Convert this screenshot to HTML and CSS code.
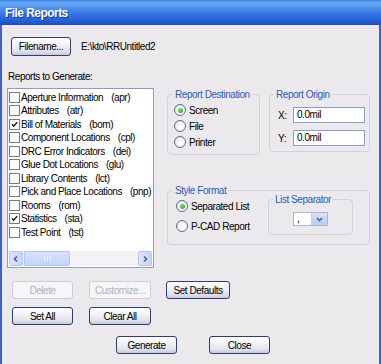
FILE: index.html
```html
<!DOCTYPE html>
<html>
<head>
<meta charset="utf-8">
<link rel="stylesheet" href="styles.css">
</head>
<body>
<div class="window">
  <div class="titlebar"><span class="title">File Reports</span></div>
  <div class="content">
    <div class="file-row">
      <button class="btn btn-file">Filename...</button>
      <span class="path">E:\kto\RRUntitled2</span>
    </div>
    <div class="section-label">Reports to Generate:</div>
    <div class="main">
      <div class="listbox">
        <ul class="items">
          <li><span class="cb"></span>Aperture Information<span class="code">(apr)</span></li>
          <li><span class="cb"></span>Attributes<span class="code">(atr)</span></li>
          <li><span class="cb checked"><svg viewBox="0 0 11 11"><path d="M2.5 5.2 L4.5 7.5 L8.8 2.6" fill="none" stroke="#111" stroke-width="1.7"/></svg></span>Bill of Materials<span class="code">(bom)</span></li>
          <li><span class="cb"></span>Component Locations<span class="code">(cpl)</span></li>
          <li><span class="cb"></span>DRC Error Indicators<span class="code">(dei)</span></li>
          <li><span class="cb"></span>Glue Dot Locations<span class="code">(glu)</span></li>
          <li><span class="cb"></span>Library Contents<span class="code">(lct)</span></li>
          <li><span class="cb"></span>Pick and Place Locations<span class="code">(pnp)</span></li>
          <li><span class="cb"></span>Rooms<span class="code">(rom)</span></li>
          <li><span class="cb checked"><svg viewBox="0 0 11 11"><path d="M2.5 5.2 L4.5 7.5 L8.8 2.6" fill="none" stroke="#111" stroke-width="1.7"/></svg></span>Statistics<span class="code">(sta)</span></li>
          <li><span class="cb"></span>Test Point<span class="code">(tst)</span></li>
        </ul>
        <div class="hscroll">
          <span class="sb-btn"><svg viewBox="0 0 8 8"><path d="M5 1.5 L2.5 4 L5 6.5" fill="none" stroke="#4d6185" stroke-width="1.6"/></svg></span>
          <span class="sb-thumb"><span class="grip"></span></span>
          <span class="sb-track"></span>
          <span class="sb-btn"><svg viewBox="0 0 8 8"><path d="M3 1.5 L5.5 4 L3 6.5" fill="none" stroke="#4d6185" stroke-width="1.6"/></svg></span>
        </div>
      </div>
      <div class="right">
        <div class="top-groups">
          <fieldset class="group dest">
            <legend>Report Destination</legend>
            <div class="dest-body">
              <div class="radio-row"><span class="radio on"></span>Screen</div>
              <div class="radio-row"><span class="radio"></span>File</div>
              <div class="radio-row"><span class="radio"></span>Printer</div>
            </div>
          </fieldset>
          <fieldset class="group origin">
            <legend>Report Origin</legend>
            <div class="origin-body">
              <div class="coord-row"><span class="coord-label">X:</span><span class="field">0.0mil</span></div>
              <div class="coord-row"><span class="coord-label">Y:</span><span class="field">0.0mil</span></div>
            </div>
          </fieldset>
        </div>
        <fieldset class="group style">
          <legend>Style Format</legend>
          <div class="style-body">
            <div class="style-radios">
              <div class="radio-row"><span class="radio on"></span>Separated List</div>
              <div class="radio-row"><span class="radio"></span>P-CAD Report</div>
            </div>
            <fieldset class="group sep">
              <legend>List Separator</legend>
              <div class="sep-body">
                <div class="combo"><span class="combo-val">,</span><span class="combo-btn"><svg viewBox="0 0 9 9"><path d="M2 3 L4.5 5.5 L7 3" fill="none" stroke="#4d6185" stroke-width="1.6"/></svg></span></div>
              </div>
            </fieldset>
          </div>
        </fieldset>
      </div>
    </div>
    <div class="btn-row row1">
      <button class="btn disabled w-delete">Delete</button>
      <button class="btn disabled w-cust">Customize...</button>
      <button class="btn w-defaults">Set Defaults</button>
    </div>
    <div class="btn-row row2">
      <button class="btn w-delete">Set All</button>
      <button class="btn w-cust">Clear All</button>
    </div>
    <div class="btn-row row3">
      <button class="btn w-gen">Generate</button>
      <button class="btn w-gen">Close</button>
    </div>
  </div>
</div>
</body>
</html>
```

FILE: styles.css
```css
html, body {
  margin: 0;
  padding: 0;
  background: #ece9ec;
  overflow: hidden;
}

.window {
  width: 381px;
  height: 364px;
  box-sizing: border-box;
  background: #ece9ec;
  border-left: 2px solid #3d62c8;
  border-right: 2px solid #3d62c8;
  font-family: "Liberation Sans", Arial, sans-serif;
  font-size: 10px;
  letter-spacing: -0.45px;
  color: #000;
  white-space: nowrap;
}

.titlebar {
  height: 25px;
  margin: 0 -2px;
  padding-left: 5px;
  display: flex;
  align-items: center;
  background: linear-gradient(#3a7fe8 0, #6aa9f4 3px, #4a8bec 9px, #3576e3 14px, #2966d8 19px, #1f52c0 24px, #1b49b0 25px);
}

.title {
  color: #fff;
  font-weight: bold;
  font-size: 12px;
  letter-spacing: -0.55px;
  text-shadow: 1px 1px 0 #0f3a9a;
}

.content {
  padding: 12px 0 0 5px;
}

.file-row {
  display: flex;
  align-items: center;
  height: 19px;
}

.btn {
  font-family: inherit;
  font-size: 10px;
  letter-spacing: -0.45px;
  color: #000;
  height: 18px;
  padding: 0;
  margin: 0;
  border: 1px solid #2d3f6a;
  border-radius: 3px;
  background: linear-gradient(#ffffff 0, #f4f4f8 35%, #e2e3ec 75%, #c8cbdd 100%);
  box-sizing: border-box;
}

.btn.disabled {
  color: #b4b2b8;
  border-color: #cfcdd4;
  background: #f6f5f7;
}

.btn-file {
  margin-left: 4px;
  width: 60px;
  height: 19px;
}

.path {
  margin-left: 10px;
}

.section-label {
  margin-top: 14px;
  margin-left: 1px;
  height: 13px;
  line-height: 13px;
}

.main {
  display: flex;
  margin-top: 5px;
}

.listbox {
  width: 147px;
  height: 180px;
  box-sizing: border-box;
  border: 1px solid #8aa0c0;
  background: #fff;
  display: flex;
  flex-direction: column;
}

.items {
  list-style: none;
  margin: 0;
  padding: 1.5px 0 0 1px;
  flex: 1;
}

.items li {
  height: 13.5px;
  line-height: 13.5px;
  display: flex;
  align-items: center;
}

.cb {
  width: 11px;
  height: 11px;
  box-sizing: border-box;
  border: 1px solid #6f7d90;
  background: #fff;
  margin-right: 1px;
  flex: none;
  display: flex;
}

.cb svg {
  width: 9px;
  height: 9px;
}

.code {
  margin-left: 8px;
}

.hscroll {
  height: 15px;
  margin: 0 1px 1px 1px;
  display: flex;
  background: #f3f2f5;
}

.sb-btn {
  width: 14px;
  height: 15px;
  box-sizing: border-box;
  border: 1px solid #b6c6ef;
  border-radius: 2px;
  background: linear-gradient(90deg, #dde6fb, #c3d3f8);
  display: flex;
  align-items: center;
  justify-content: center;
}

.sb-btn svg {
  width: 8px;
  height: 8px;
}

.sb-thumb {
  width: 46px;
  margin-left: 1px;
  height: 15px;
  box-sizing: border-box;
  border: 1px solid #b6c6ef;
  border-radius: 2px;
  background: linear-gradient(#d6e2fc, #c4d4f9);
  display: flex;
  align-items: center;
  justify-content: center;
}

.grip {
  width: 5px;
  height: 5px;
  border-left: 1px solid #eef3ff;
  border-right: 1px solid #eef3ff;
  background: linear-gradient(90deg, transparent 2px, #eef3ff 2px, #eef3ff 3px, transparent 3px);
}

.sb-track {
  flex: 1;
}

.right {
  margin-left: 13px;
  width: 203px;
}

.top-groups {
  display: flex;
  gap: 9px;
  align-items: flex-start;
}

.group {
  margin: 0;
  padding: 0;
  min-width: 0;
  border: 1px solid #d3d0d8;
  border-radius: 4px;
  box-sizing: border-box;
}

.group legend {
  padding: 0 2px;
  margin-left: 5px;
  color: #2c5ab8;
  line-height: 13px;
}

.dest {
  width: 93px;
  height: 67px;
}

.dest-body {
  padding: 1px 0 0 6px;
}

.radio-row {
  height: 16px;
  display: flex;
  align-items: center;
}

.radio {
  width: 12px;
  height: 12px;
  box-sizing: border-box;
  border: 1px solid #5d6e8a;
  border-radius: 50%;
  background: radial-gradient(circle at 60% 60%, #ffffff 0, #f2f2f2 50%, #d6d6de 100%);
  margin-right: 3px;
  display: flex;
  align-items: center;
  justify-content: center;
  flex: none;
}

.radio.on::after {
  content: "";
  width: 5px;
  height: 5px;
  border-radius: 50%;
  background: radial-gradient(circle at 40% 40%, #7fdc6a, #2b9a25);
}

.origin {
  width: 101px;
  height: 64px;
}

.origin legend {
  margin-left: 4px;
}

.origin-body {
  padding: 6px 0 0 8px;
}

.coord-row {
  display: flex;
  align-items: center;
  height: 16px;
  margin-bottom: 7px;
}

.coord-label {
  width: 15px;
}

.field {
  width: 72px;
  height: 16px;
  box-sizing: border-box;
  border: 1px solid #8aa0c0;
  background: #fff;
  padding-left: 3px;
  line-height: 14px;
}

.style {
  margin-top: 29px;
  height: 61px;
  width: 203px;
}

.style-body {
  display: flex;
  align-items: flex-start;
}

.style-radios {
  width: 92px;
  padding: 2px 0 0 8px;
}

.style-radios .radio-row {
  height: 14px;
  margin-bottom: 6px;
}

.sep {
  margin-top: -4px;
  width: 85px;
  height: 42px;
}

.sep legend {
  margin-left: 4px;
}

.sep-body {
  display: flex;
  justify-content: center;
}

.combo {
  margin-top: 6px;
  width: 35px;
  height: 14px;
  box-sizing: border-box;
  border: 1px solid #a9b8d4;
  background: #fff;
  display: flex;
}

.combo-val {
  flex: 1;
  padding-left: 3px;
  line-height: 11px;
}

.combo-btn {
  width: 15px;
  background: linear-gradient(#d6e2fc, #b9cbf6);
  border-left: 1px solid #c3d1f2;
  display: flex;
  align-items: center;
  justify-content: center;
}

.combo-btn svg {
  width: 9px;
  height: 9px;
}

.btn-row {
  display: flex;
}

.row1 {
  margin-top: 13px;
  padding-left: 5px;
}

.row2 {
  margin-top: 8px;
  padding-left: 5px;
}

.row3 {
  margin-top: 11px;
  padding-left: 109px;
  gap: 32px;
}

.w-delete {
  width: 61px;
}

.w-cust {
  width: 62px;
  margin-left: 16px;
}

.w-defaults {
  width: 64px;
  margin-left: 15px;
}

.w-gen {
  width: 61px;
}
```
